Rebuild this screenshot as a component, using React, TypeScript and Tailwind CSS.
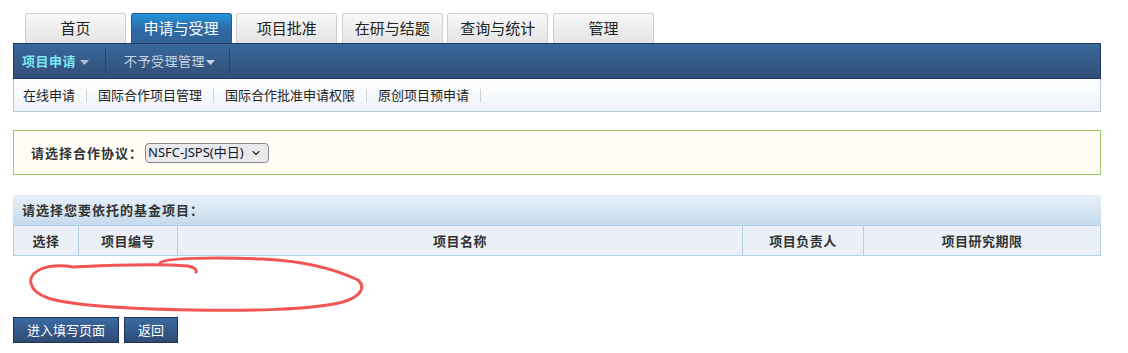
import { ChevronDown } from "lucide-react";

const tabs = ["首页", "申请与受理", "项目批准", "在研与结题", "查询与统计", "管理"];
const subLinks = ["在线申请", "国际合作项目管理", "国际合作批准申请权限", "原创项目预申请"];

function Caret({ className }: { className: string }) {
  return (
    <svg width="9" height="5" viewBox="0 0 9 5" className={className}>
      <path d="M0 0 H9 L4.5 5 Z" fill="currentColor" />
    </svg>
  );
}

export default function App() {
  return (
    <div className="bg-white w-[1128px] h-[353px] font-['Noto_Sans_CJK_SC','Noto_Sans',sans-serif] text-[#333]">
      <div className="pt-[13px] px-[13px] w-[1101px] box-content">
        {/* tabs */}
        <div className="flex gap-[4.6px] pl-[12px] h-[30px]">
          {tabs.map((t, i) =>
            i === 1 ? (
              <div
                key={t}
                className="w-[101px] h-[30px] rounded-t-[3px] border border-b-0 border-[#2a5a8c] bg-gradient-to-b from-[#1e95dd] via-[#2d6aa6] to-[#336497] text-white text-[15px] flex items-center justify-center"
              >
                {t}
              </div>
            ) : (
              <div
                key={t}
                className="w-[101px] h-[30px] rounded-t-[3px] border border-b-0 border-[#cfcfcf] bg-gradient-to-b from-[#f8f8f8] to-[#e4e4e4] text-[#222] text-[15px] flex items-center justify-center"
              >
                {t}
              </div>
            )
          )}
        </div>

        {/* blue bar */}
        <div className="w-[1088px] h-[36px] border border-[#1f3b63] bg-gradient-to-b from-[#36699c] to-[#344e78] flex items-center tracking-[0.5px]">
          <div className="flex items-center h-[26px] pl-[8px] pr-[16px] border-r border-[#27446c]">
            <span className="text-[13px] font-bold text-[#7de6f3]">项目申请</span>
            <Caret className="ml-[4px] mt-[2px] text-[#aebfd2]" />
          </div>
          <div className="flex items-center h-[26px] pl-[18px] pr-[14px] border-r border-[#27446c]">
            <span className="text-[13px] text-[#c7d4e3]">不予受理管理</span>
            <Caret className="ml-[1px] mt-[2px] text-[#c7d4e3]" />
          </div>
        </div>

        {/* sub nav */}
        <div className="w-[1088px] h-[33px] border border-t-0 border-[#b8c8d8] bg-gradient-to-b from-white to-[#eef3f8] flex items-center pl-[9px] text-[13px] text-[#222]">
          {subLinks.map((s) => (
            <div key={s} className="flex items-center">
              <span>{s}</span>
              <span className="mx-[11px] h-[13px] w-px bg-[#cfcfcf]" />
            </div>
          ))}
        </div>

        {/* agreement selector */}
        <div className="mt-[18px] w-[1088px] h-[45px] border border-[#98cc5c] bg-[#fffdf5] flex items-center pl-[17px]">
          <span className="text-[13px] font-bold text-[#333] tracking-[1px]">请选择合作协议：</span>
          <div className="ml-[2px] h-[20px] w-[124px] rounded-[4px] border border-[#8a8a8a] bg-[#e9e9ee] flex items-center pl-[2px] text-[13px] text-[#10182a] font-['Noto_Sans','Noto_Sans_CJK_SC',sans-serif]">
            <span>NSFC-JSPS(中日)</span>
            <ChevronDown size={12} strokeWidth={2.5} className="ml-[6px] text-[#333]" />
          </div>
        </div>

        {/* project table */}
        <div className="mt-[20px] w-[1088px]">
          <div className="h-[31px] bg-gradient-to-b from-[#e8f1fa] to-[#c4dbec] border-b border-[#b4d0e6] flex items-center pl-[9px] text-[13px] font-bold text-[#333] tracking-[1px]">
            请选择您要依托的基金项目：
          </div>
          <div className="grid grid-cols-[65px_99px_565px_121px_1fr] h-[30px] bg-[#ebf0f8] border border-t-0 border-[#b4d0e6] text-[13px] font-bold text-[#333] tracking-[0.5px]">
            <div className="flex items-center justify-center border-r border-[#b4d0e6]">选择</div>
            <div className="flex items-center justify-center border-r border-[#b4d0e6]">项目编号</div>
            <div className="flex items-center justify-center border-r border-[#b4d0e6]">项目名称</div>
            <div className="flex items-center justify-center border-r border-[#b4d0e6]">项目负责人</div>
            <div className="flex items-center justify-center">项目研究期限</div>
          </div>
        </div>

        {/* hand-drawn annotation */}
        <svg width="360" height="58" viewBox="0 0 360 58" className="block">
          <path
            d="M147,7 C150,2 200,1 250,3 C290,5 320,12 345,24 C352,30 350,40 330,46 C300,54 230,55 180,54 C120,53 60,50 35,42 C15,35 12,20 28,13 C40,8 55,10 60,11 C100,9 150,8 175,10 C180,11 184,13 183,16"
            fill="none"
            stroke="#f25555"
            strokeWidth="3"
            strokeLinecap="round"
          />
        </svg>

        {/* actions */}
        <div className="mt-[3px] flex gap-[5px]">
          <button className="h-[26px] px-[13px] border border-[#1c3250] bg-gradient-to-b from-[#3a6ba3] to-[#2f4a74] text-white text-[13px]">
            进入填写页面
          </button>
          <button className="h-[26px] px-[13px] border border-[#1c3250] bg-gradient-to-b from-[#3a6ba3] to-[#2f4a74] text-white text-[13px]">
            返回
          </button>
        </div>
      </div>
    </div>
  );
}
